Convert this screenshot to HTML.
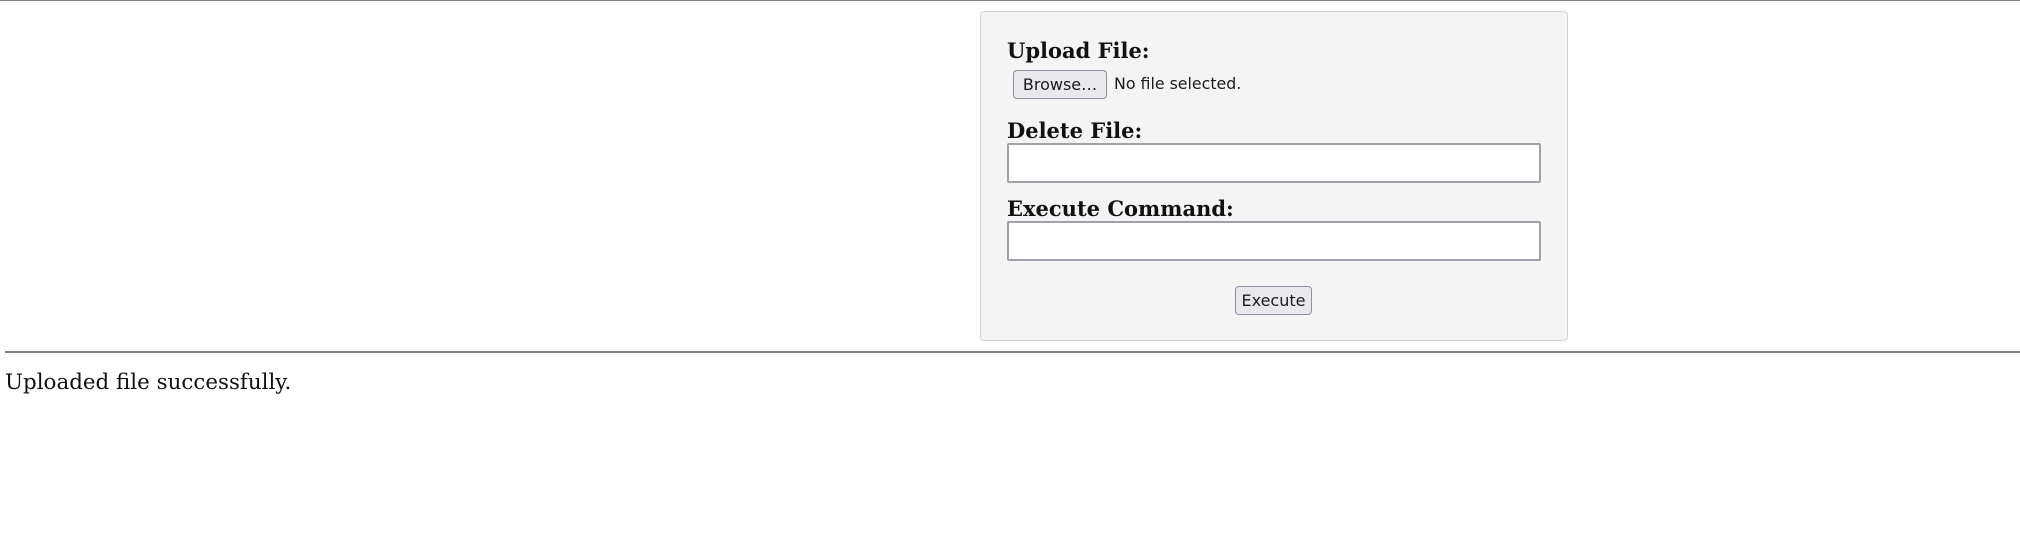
<!DOCTYPE html>
<html><head><meta charset="utf-8"><style>
body{margin:0;width:2020px;height:539px;background:#fff;position:relative;overflow:hidden;font-family:"DejaVu Serif","Liberation Serif",serif;color:#111}
.hr{position:absolute;left:0;height:2px;background:#808080}
.box{position:absolute;left:980px;top:11px;width:588px;height:330px;background:#f4f4f4;border:1px solid #d4d4d4;border-radius:4px;box-sizing:border-box}
.lbl{position:absolute;left:1007px;font-weight:bold;font-size:21px;white-space:nowrap}
.btn{position:absolute;background:#e9e9ed;border:1px solid #8f8f9d;border-radius:4px;box-sizing:border-box;font-family:"DejaVu Sans","Liberation Sans",sans-serif;font-size:16px;text-align:center;color:#1b1b1b}
.inp{position:absolute;left:1007px;width:534px;height:40px;background:#fff;border:2px solid #a0a0a8;border-radius:2px;box-sizing:border-box}
</style></head><body>
<div class="hr" style="top:0;width:2020px;height:1px"></div>
<div class="box"></div>
<div class="lbl" style="top:38px">Upload File:</div>
<div class="btn" style="left:1013px;top:70px;width:94px;height:29px;line-height:27px">Browse…</div>
<div style="position:absolute;left:1114px;top:74px;font-family:'DejaVu Sans','Liberation Sans',sans-serif;font-size:15.8px;color:#1b1b1b">No file selected.</div>
<div class="lbl" style="top:118px">Delete File:</div>
<div class="inp" style="top:143px"></div>
<div class="lbl" style="top:196px">Execute Command:</div>
<div class="inp" style="top:221px"></div>
<div class="btn" style="left:1235px;top:286px;width:77px;height:29px;line-height:27px">Execute</div>
<div class="hr" style="top:351px;left:5px;width:2015px;height:2px"></div>
<div style="position:absolute;left:5px;top:370px;font-size:21.4px">Uploaded file successfully.</div>
</body></html>
